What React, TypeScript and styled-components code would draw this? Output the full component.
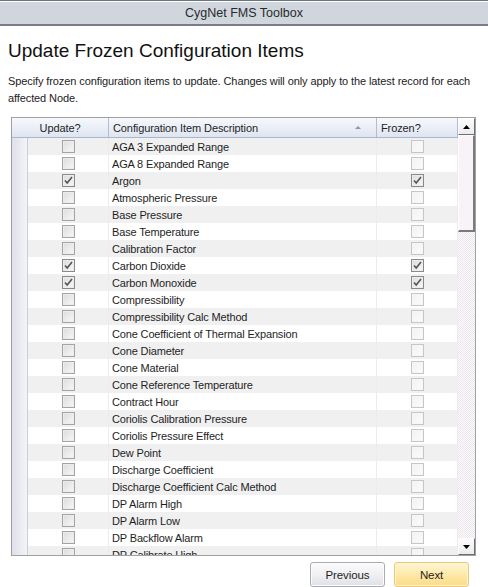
import styled, { createGlobalStyle } from 'styled-components';

const Global = createGlobalStyle`
  html, body { margin: 0; padding: 0; background: #fff; }
  body { font-family: "Liberation Sans", Arial, sans-serif; color: #1e1e1e; }
`;

const Window = styled.div`
  width: 488px;
  height: 587px;
  display: flex;
  flex-direction: column;
  overflow: hidden;
`;

const TitleBar = styled.div`
  height: 28px;
  border-top: 1px solid #6b7580;
  box-shadow: inset 0 1px 0 #fff;
  background: #cfd6de;
  border-bottom: 2px solid #7c7c84;
  display: flex;
  align-items: center;
  justify-content: center;
  font-size: 12.5px;
  color: #2a2a2a;
  padding-top: 1px;
`;

const Body = styled.div`
  padding: 12px 8px 0 8px;
  display: flex;
  flex-direction: column;
`;

const Heading = styled.h1`
  margin: 0;
  font-weight: normal;
  font-size: 19px;
  line-height: 26px;
  color: #111;
`;

const Description = styled.p`
  margin: 9px 0 0 0;
  font-size: 11px;
  letter-spacing: -0.1px;
  line-height: 17px;
  color: #222;
`;

const Grid = styled.div`
  margin: 10px 0 0 3px;
  width: 463px;
  height: 437px;
  border: 1px solid #a0a0a0;
  display: flex;
  overflow: hidden;
`;

const Table = styled.div`
  width: 446px;
  display: flex;
  flex-direction: column;
  overflow: hidden;
`;

const cols = '16px 81px 268px 81px';

const HeaderRow = styled.div`
  display: grid;
  grid-template-columns: ${cols};
  height: 19px;
  flex: none;
  background: linear-gradient(#f6f8fc, #dfe5f0);
  border-bottom: 1px solid #a9b6cc;
`;

const HeaderCell = styled.div<{ $align?: string; $span?: number }>`
  grid-column: span ${(p) => p.$span ?? 1};
  display: flex;
  align-items: center;
  justify-content: ${(p) => p.$align ?? 'flex-start'};
  padding: 0 4px;
  font-size: 11px;
  letter-spacing: -0.1px;
  color: #1e1e1e;
  border-right: 1px solid #aebcd4;
  position: relative;
`;

const SortArrow = styled.span`
  position: absolute;
  right: 15px;
  top: 8px;
  width: 0;
  height: 0;
  border-left: 3px solid transparent;
  border-right: 3px solid transparent;
  border-bottom: 3px solid #8a96aa;
`;

const Row = styled.div<{ $odd: boolean }>`
  display: grid;
  grid-template-columns: ${cols};
  height: 17px;
  flex: none;
  background: ${(p) => (p.$odd ? '#f0f0f0' : '#fff')};
`;

const RowHeader = styled.div`
  background: linear-gradient(to right, #dedfe9, #f4f4f8);
  border-right: 1px solid #c9cde0;
`;

const Cell = styled.div<{ $center?: boolean }>`
  display: flex;
  align-items: center;
  justify-content: ${(p) => (p.$center ? 'center' : 'flex-start')};
  padding: 0 3px;
  font-size: 11px;
  letter-spacing: -0.15px;
  color: #1e1e1e;
  border-right: 1px solid #f1e9ee;
  white-space: nowrap;
`;

const Box = styled.span<{ $checked: boolean; $dim?: boolean }>`
  width: 11px;
  height: 11px;
  border: 1px solid ${(p) => (p.$checked ? '#8a8a8a' : p.$dim ? '#c6c6c6' : '#a4a4a4')};
  background: ${(p) =>
    p.$dim && !p.$checked
      ? 'linear-gradient(135deg, #f2f2f2, #fbfbfb)'
      : 'linear-gradient(135deg, #dcdcdc, #f8f8f8)'};
  box-shadow: inset 0 0 0 1px ${(p) => (p.$dim && !p.$checked ? '#f6f6f6' : '#ececec')};
  display: flex;
  align-items: center;
  justify-content: center;
`;

const ScrollBar = styled.div`
  width: 17px;
  display: flex;
  flex-direction: column;
  background-color: #f5f1f5;
  background-image: repeating-conic-gradient(#fdfbfd 0 25%, #ebe6eb 0 50%);
  background-size: 2px 2px;
`;

const ScrollButton = styled.div`
  flex: none;
  background: linear-gradient(#fbfbfb, #ecebef);
  border: 1px solid #fff;
  border-right-color: #6e6e6e;
  border-bottom-color: #6e6e6e;
  box-sizing: border-box;
  height: 17px;
  display: flex;
  align-items: center;
  justify-content: center;
`;

const Thumb = styled.div`
  height: 97px;
  flex: none;
  background: #f7f3f7;
  border: 1px solid #fff;
  border-right: 2px solid #7a7a7a;
  border-bottom: 2px solid #7a7a7a;
  box-sizing: border-box;
`;

const Track = styled.div`
  flex: 1;
`;

const Footer = styled.div`
  display: flex;
  justify-content: flex-end;
  gap: 9px;
  margin: 6px 11px 0 0;
`;

const Button = styled.button<{ $primary?: boolean }>`
  width: 75px;
  height: 25px;
  border-radius: 3px;
  font-family: inherit;
  font-size: 11.5px;
  letter-spacing: -0.1px;
  color: #1e1e1e;
  border: 1px solid ${(p) => (p.$primary ? '#ecc878' : '#a9abb4')};
  background: ${(p) =>
    p.$primary
      ? 'linear-gradient(#fff6d6, #fde9a8 50%, #fbdc86)'
      : 'linear-gradient(#fbfbfc, #f0f0f3 50%, #e0e1e7)'};
  box-shadow: inset 0 0 0 1px ${(p) => (p.$primary ? '#fff4cc' : '#fcfcfd')};
  padding: 0;
`;

const items: [string, boolean][] = [
  ['AGA 3 Expanded Range', false],
  ['AGA 8 Expanded Range', false],
  ['Argon', true],
  ['Atmospheric Pressure', false],
  ['Base Pressure', false],
  ['Base Temperature', false],
  ['Calibration Factor', false],
  ['Carbon Dioxide', true],
  ['Carbon Monoxide', true],
  ['Compressibility', false],
  ['Compressibility Calc Method', false],
  ['Cone Coefficient of Thermal Expansion', false],
  ['Cone Diameter', false],
  ['Cone Material', false],
  ['Cone Reference Temperature', false],
  ['Contract Hour', false],
  ['Coriolis Calibration Pressure', false],
  ['Coriolis Pressure Effect', false],
  ['Dew Point', false],
  ['Discharge Coefficient', false],
  ['Discharge Coefficient Calc Method', false],
  ['DP Alarm High', false],
  ['DP Alarm Low', false],
  ['DP Backflow Alarm', false],
  ['DP Calibrate High', false],
];

const Check = () => (
  <svg width="9" height="9" viewBox="0 0 9 9">
    <path d="M1 4.5 L3.2 7 L8 1" fill="none" stroke="#555" strokeWidth="1.6" />
  </svg>
);

const CheckBox = ({ checked, dim }: { checked: boolean; dim?: boolean }) => (
  <Box $checked={checked} $dim={dim}>
    {checked && <Check />}
  </Box>
);

const Triangle = ({ up }: { up: boolean }) => (
  <svg width="7" height="4" viewBox="0 0 7 4">
    <path d={up ? 'M0 4 L3.5 0 L7 4 Z' : 'M0 0 L3.5 4 L7 0 Z'} fill="#000" />
  </svg>
);

export default function App() {
  return (
    <Window>
      <Global />
      <TitleBar>CygNet FMS Toolbox</TitleBar>
      <Body>
        <Heading>Update Frozen Configuration Items</Heading>
        <Description>
          Specify frozen configuration items to update. Changes will only apply to the latest record for each
          affected Node.
        </Description>
        <Grid>
          <Table>
            <HeaderRow>
              <HeaderCell $span={2} $align="center">Update?</HeaderCell>
              <HeaderCell>
                Configuration Item Description
                <SortArrow />
              </HeaderCell>
              <HeaderCell>Frozen?</HeaderCell>
            </HeaderRow>
            {items.map(([name, checked], i) => (
              <Row key={name} $odd={i % 2 === 0}>
                <RowHeader />
                <Cell $center>
                  <CheckBox checked={checked} />
                </Cell>
                <Cell>{name}</Cell>
                <Cell $center>
                  <CheckBox checked={checked} dim />
                </Cell>
              </Row>
            ))}
          </Table>
          <ScrollBar>
            <ScrollButton>
              <Triangle up />
            </ScrollButton>
            <Thumb />
            <Track />
            <ScrollButton>
              <Triangle up={false} />
            </ScrollButton>
          </ScrollBar>
        </Grid>
        <Footer>
          <Button>Previous</Button>
          <Button $primary>Next</Button>
        </Footer>
      </Body>
    </Window>
  );
}
